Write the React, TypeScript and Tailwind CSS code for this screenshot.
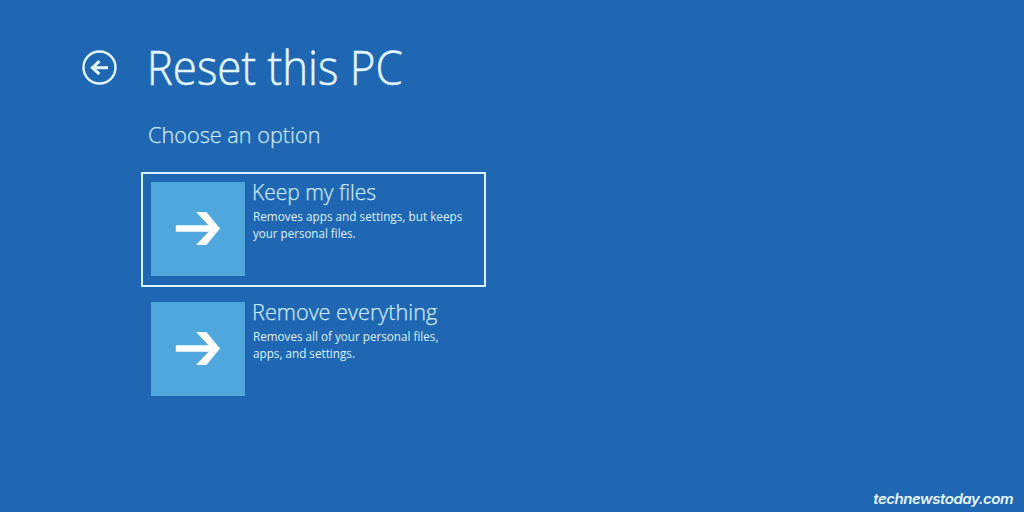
import clsx from "clsx";

const options = [
  {
    title: "Keep my files",
    titleScale: "scale-x-[0.955]",
    lines: [
      { text: "Removes apps and settings, but keeps", scale: "scale-x-[0.905]" },
      { text: "your personal files.", scale: "scale-x-[0.89]" },
    ],
    selected: true,
  },
  {
    title: "Remove everything",
    titleScale: "scale-x-[0.985]",
    lines: [
      { text: "Removes all of your personal files,", scale: "scale-x-[0.898]" },
      { text: "apps, and settings.", scale: "scale-x-[0.9]" },
    ],
    selected: false,
  },
];

const BackIcon = () => (
  <svg width="36" height="36" viewBox="0 0 36 36" fill="none" stroke="#e2f6ff">
    <circle cx="18.5" cy="17.5" r="16" strokeWidth="2.4" />
    <path d="M11 17.7H27" strokeWidth="3" />
    <path d="M18.4 11.2L11.5 17.7L18.4 24.2" strokeWidth="3.2" />
  </svg>
);

const ArrowIcon = () => (
  <svg width="94" height="94" viewBox="0 0 94 94" fill="#fcffff">
    <path d="M24.8 43.3H57.5L45 30H55.5L69 46.5L55.5 63H45L57.5 49.7H24.8Z" />
  </svg>
);

const App = () => {
  return (
    <main className="flex h-[512px] w-[1024px] flex-col overflow-hidden bg-[#1f67b3] font-['Open_Sans','Noto_Sans',sans-serif] text-[#def3ff]">
      <header className="flex h-[104px] shrink-0 pl-[81px] pt-[35px]">
        <button aria-label="Back" className="mt-[15px] h-9 w-9">
          <BackIcon />
        </button>
        <h1 className="ml-[27px] origin-left scale-x-[0.933] whitespace-nowrap pl-[3px] text-[47px] font-light leading-[64px] text-[#e2f6ff] [-webkit-text-stroke:0.5px_#e2f6ff]">
          Reset this PC
        </h1>
      </header>

      <h2 className="ml-[148px] h-[68px] origin-left scale-x-[0.985] whitespace-nowrap pt-[15px] text-[22px] font-light leading-[30px] text-[#cdeafc] [-webkit-text-stroke:0.25px_#cdeafc]">
        Choose an option
      </h2>

      <ul className="ml-[141px] flex w-[345px] flex-col gap-[5px]">
        {options.map((option) => (
          <li
            key={option.title}
            className={clsx(
              "flex h-[115px] border-2 p-2",
              option.selected ? "border-[#d9f4ff]" : "border-transparent"
            )}
          >
            <div className="h-[94px] w-[94px] shrink-0 bg-[#4fa7dd]">
              <ArrowIcon />
            </div>
            <div className="ml-[7px] whitespace-nowrap">
              <h3
                className={clsx(
                  "-mt-[5px] mb-[3px] origin-left text-[22px] font-light leading-7 text-[#cdeafc] [-webkit-text-stroke:0.25px_#cdeafc]",
                  option.titleScale
                )}
              >
                {option.title}
              </h3>
              {option.lines.map((line) => (
                <p
                  key={line.text}
                  className={clsx(
                    "ml-px origin-left text-[13px] leading-[17px]",
                    line.scale
                  )}
                >
                  {line.text}
                </p>
              ))}
            </div>
          </li>
        ))}
      </ul>

      <footer className="mt-auto flex justify-end pb-[3px] pr-[11px]">
        <span className="origin-right scale-x-[1.075] font-['Inter',sans-serif] text-[14px] font-semibold italic leading-5 tracking-[-0.45px] text-[#e6f6ff] [font-feature-settings:'cv11']">
          technewstoday.com
        </span>
      </footer>
    </main>
  );
};

export default App;
